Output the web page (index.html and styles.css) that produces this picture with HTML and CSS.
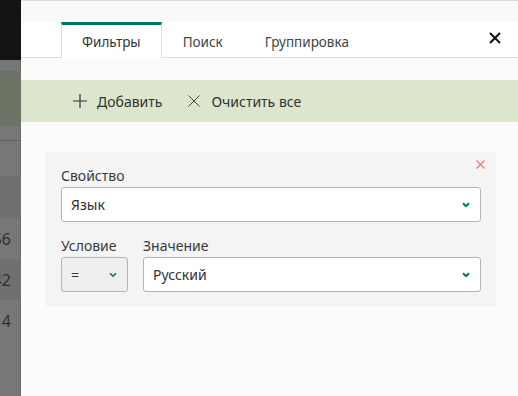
FILE: index.html
```html
<!DOCTYPE html>
<html lang="ru">
<head>
  <meta charset="UTF-8">
  <meta name="viewport" content="width=device-width, initial-scale=1.0">
  <title>Фильтры</title>
  <link rel="stylesheet" href="styles.css">
</head>
<body>
  <div class="backdrop">
    <div class="bd-top"></div>
    <div class="bd-gap"></div>
    <div class="bd-bar"></div>
    <div class="bd-head"></div>
    <div class="bd-row"></div>
    <div class="bd-row dark"></div>
    <div class="bd-row tall">56</div>
    <div class="bd-row tall dark">42</div>
    <div class="bd-row tall">14</div>
  </div>

  <div class="panel">
    <div class="panel-top"></div>
    <div class="tabs">
      <div class="tab active">Фильтры</div>
      <div class="tab">Поиск</div>
      <div class="tab">Группировка</div>
      <div class="close-btn">
        <svg width="14" height="14" viewBox="0 0 14 14"><path d="M2 2L12 12M12 2L2 12" stroke="#111" stroke-width="2"/></svg>
      </div>
    </div>

    <div class="toolbar">
      <div class="tool">
        <svg width="14" height="14" viewBox="0 0 14 14"><path d="M7 0V14M0 7H14" stroke="#333" stroke-width="1.2"/></svg>
        <span>Добавить</span>
      </div>
      <div class="tool">
        <svg width="14" height="14" viewBox="0 0 14 14"><path d="M1.5 1.5L12.5 12.5M12.5 1.5L1.5 12.5" stroke="#444" stroke-width="1"/></svg>
        <span>Очистить все</span>
      </div>
    </div>

    <div class="card">
      <div class="card-close">
        <svg width="9" height="9" viewBox="0 0 9 9"><path d="M0.5 0.5L8.5 8.5M8.5 0.5L0.5 8.5" stroke="#f07070" stroke-width="1.1"/></svg>
      </div>
      <div class="field">
        <div class="label">Свойство</div>
        <div class="select">
          <span>Язык</span>
          <svg class="chev" width="8" height="6" viewBox="0 0 8 6"><path d="M1 1.2L4 4.2L7 1.2" stroke="#00745f" stroke-width="2" fill="none"/></svg>
        </div>
      </div>
      <div class="field-row">
        <div class="field cond">
          <div class="label">Условие</div>
          <div class="select grey">
            <span>=</span>
            <svg class="chev" width="8" height="6" viewBox="0 0 8 6"><path d="M1 1.2L4 4.2L7 1.2" stroke="#00745f" stroke-width="1.6" fill="none"/></svg>
          </div>
        </div>
        <div class="field value">
          <div class="label">Значение</div>
          <div class="select">
            <span>Русский</span>
            <svg class="chev" width="8" height="6" viewBox="0 0 8 6"><path d="M1 1.2L4 4.2L7 1.2" stroke="#00745f" stroke-width="2" fill="none"/></svg>
          </div>
        </div>
      </div>
    </div>
  </div>
</body>
</html>
```

FILE: styles.css
```css
body {
  font-family: "Noto Sans", "Open Sans", sans-serif;
  font-size: 14px;
  color: #333;
  margin: 0;
  padding: 0;
  display: flex;
  height: 396px;
  overflow: hidden;
}

.backdrop {
  width: 21px;
  flex-shrink: 0;
  background-color: #777;
  overflow: hidden;
  box-shadow: inset -1px 0 0 #6a6a6a;
}

.bd-top {
  height: 60px;
  background-color: #141414;
}

.bd-gap {
  height: 11px;
}

.bd-bar {
  height: 55px;
  background-color: #6d7465;
}

.bd-head {
  height: 14px;
  border-bottom: 1px solid #5f5f5f;
}

.bd-row {
  height: 35px;
  text-align: right;
  padding-right: 10px;
  font-size: 16px;
  line-height: 42px;
  color: #2e2e2e;
  white-space: nowrap;
  direction: rtl;
}

.bd-row.tall {
  height: 41px;
}

.bd-row.dark {
  background-color: #707070;
  height: 42px;
}

.bd-row.tall.dark {
  height: 41px;
}

.panel {
  flex: 1;
  background-color: #fbfbfb;
  display: flex;
  flex-direction: column;
}

.panel-top {
  height: 21px;
  border-top: 1px solid #dcdcdc;
  background-color: #f9f9f9;
}

.tabs {
  display: flex;
  align-items: stretch;
  height: 35px;
  background-color: #fff;
  border-bottom: 1px solid #dcdcdc;
  padding-left: 40px;
  font-size: 13.5px;
}

.tab {
  padding: 0 20px;
  display: flex;
  align-items: center;
  color: #444;
  border-top: 3px solid transparent;
  border-left: 1px solid transparent;
  border-right: 1px solid transparent;
  margin-bottom: -1px;
}

.tab.active {
  border-top-color: #00745f;
  border-left-color: #dcdcdc;
  border-right-color: #dcdcdc;
  background-color: #fff;
  color: #333;
}

.close-btn {
  margin-left: auto;
  padding: 0 16px 4px 0;
  display: flex;
  align-items: center;
  cursor: pointer;
}

.toolbar {
  margin-top: 22px;
  height: 42px;
  background-color: #dce6cc;
  display: flex;
  align-items: center;
  gap: 25px;
  padding-left: 52px;
}

.tool {
  display: flex;
  align-items: center;
  gap: 10px;
  color: #333;
  cursor: pointer;
}

.card {
  position: relative;
  margin: 30px 22px 0 25px;
  background-color: #f4f4f4;
  padding: 14px 15px 15px 15px;
}

.card-close {
  position: absolute;
  top: 8px;
  right: 11px;
  line-height: 0;
}

.label {
  line-height: 20px;
  margin-bottom: 1px;
  color: #3a3a3a;
}

.select {
  height: 33px;
  border: 1px solid #b4b4b4;
  border-radius: 3px;
  background-color: #fff;
  display: flex;
  align-items: center;
  justify-content: space-between;
  padding: 0 10px 0 9px;
}

.select.grey {
  background-color: #efefef;
}

.field-row {
  display: flex;
  gap: 15px;
  margin-top: 14px;
}

.field.cond {
  width: 67px;
}

.field.value {
  flex: 1;
}
```
